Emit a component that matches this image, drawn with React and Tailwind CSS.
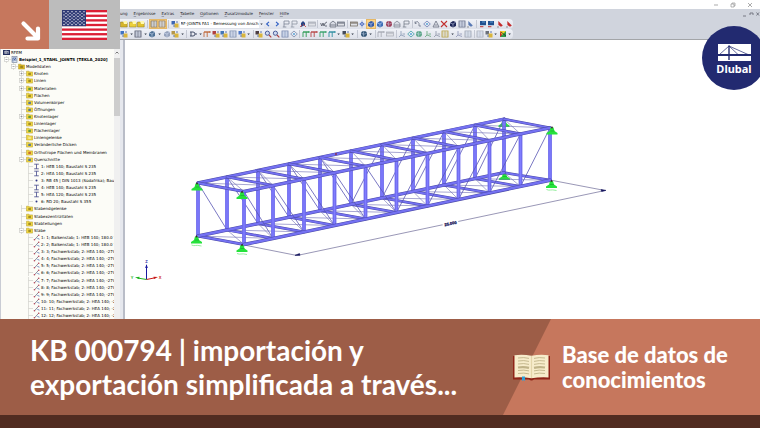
import React from 'react'

const MENU = ['Ergebnisse', 'Extras', 'Tabelle', 'Optionen', 'Zusatzmodule', 'Fenster', 'Hilfe']

// [level, icon, label, expander]
const TREE = [
  [0, 'app', 'RFEM'],
  [1, 'model', 'Beispiel_1_STAHL_JOINTS [TEKLA_2020]', '-'],
  [2, 'open', 'Modelldaten', '-'],
  [3, 'folder', 'Knoten', '+'],
  [3, 'folder', 'Linien', '+'],
  [3, 'green', 'Materialien', '+'],
  [3, 'folder', 'Flächen'],
  [3, 'blue', 'Volumenkörper'],
  [3, 'blue', 'Öffnungen'],
  [3, 'green', 'Knotenlager', '+'],
  [3, 'folder', 'Linienlager'],
  [3, 'green', 'Flächenlager'],
  [3, 'pale', 'Liniengelenke'],
  [3, 'blue', 'Veränderliche Dicken'],
  [3, 'red', 'Orthotrope Flächen und Membranen'],
  [3, 'blue', 'Querschnitte', '-'],
  [4, 'beam', '1: HEB 140; Baustahl S 235'],
  [4, 'beam', '2: HEA 140; Baustahl S 235'],
  [4, 'dot', '3: RB 45 | DIN 1013 (Südafrika); Bau'],
  [4, 'beam', '4: HEB 140; Baustahl S 235'],
  [4, 'beam', '5: HEA 120; Baustahl S 235'],
  [4, 'dot', '6: RD 20; Baustahl S 355'],
  [3, 'folder', 'Stabendgelenke'],
  [3, 'folder', 'Stabexzentrizitäten'],
  [3, 'folder', 'Stabteilungen'],
  [3, 'folder', 'Stäbe', '-'],
  [4, 'member', '1: 1; Balkenstab; 1: HEB 140; 180.0 °'],
  [4, 'member', '2: 2; Balkenstab; 1: HEB 140; 180.0 °'],
  [4, 'member', '3: 3; Fachwerkstab; 2: HEA 140; -270'],
  [4, 'member', '4: 4; Fachwerkstab; 2: HEA 140; -270'],
  [4, 'member', '5: 5; Fachwerkstab; 2: HEA 140; -270'],
  [4, 'member', '6: 6; Fachwerkstab; 2: HEA 140; -270'],
  [4, 'member', '7: 7; Fachwerkstab; 2: HEA 140; -270'],
  [4, 'member', '8: 8; Fachwerkstab; 2: HEA 140; -270'],
  [4, 'member', '9: 9; Fachwerkstab; 2: HEA 140; -270'],
  [4, 'member', '10: 10; Fachwerkstab; 2: HEA 140; -2'],
  [4, 'member', '11: 11; Fachwerkstab; 2: HEA 140; -2'],
  [4, 'member', '12: 12; Fachwerkstab; 2: HEA 140; -2'],
]

const GLYPHS = {
  folder: (c) => <><path d="M.5 2h3l.7.8h3V7H.5z" fill={c} stroke="#8a7420" strokeWidth=".5" /><path d="M3 1h4v3H4z" fill="#fff8b0" /></>,
  table: (c) => <><rect x="1" y="1" width="6" height="6" fill="#e8eefc" stroke={c} strokeWidth=".8" /><path d="M1 3h6M1 5h6M4 1v6" stroke={c} strokeWidth=".5" /></>,
  bar: (c) => <><rect x=".5" y="2" width="7" height="4" fill="#dfe1e6" stroke={c} strokeWidth=".7" /><path d="M1 3h6" stroke={c} /></>,
  stack: (c) => <><rect x=".5" y="1" width="3.5" height="3.5" fill={c} /><rect x="3.5" y="3.5" width="4" height="4" fill="#d9b53c" /><path d="M2 6h2M5 2h2" stroke="#3c5b9c" strokeWidth=".8" /></>,
  left: (c) => <path d="M5 1.8 2.6 4 5 6.2" fill="none" stroke={c} strokeWidth="1.1" />,
  right: (c) => <path d="M3 1.8 5.4 4 3 6.2" fill="none" stroke={c} strokeWidth="1.1" />,
  flag: (c) => <path d="M2 7V1h5v3H2M.8 7h3.5" fill="none" stroke={c} strokeWidth=".8" />,
  person: (c) => <><path d="M2 7V3l2-2 2 2v2" fill={c} /><path d="m4 4 3 3M1 7l2-2" stroke="#c23a3a" strokeWidth=".8" /></>,
  wave: (c) => <path d="M.6 3l1.2 3L3 3l1 3 1.2-3L7 2M5 6h2" fill="none" stroke={c} strokeWidth=".8" />,
  home: (c) => <><path d="M1 7V3.5L4 1l3 2.5V7z" fill="#d8dbe4" stroke={c} strokeWidth=".7" /><path d="M1 5h6" stroke={c} strokeWidth=".7" /></>,
  star: (c) => <><circle cx="4" cy="4" r="1.5" fill="none" stroke={c} /><path d="M4 .5v7M.5 4h7" stroke={c} strokeWidth=".5" /></>,
  cube: (c) => <><path d="M1 3l3-2 3 1v4L4 7.5 1 6z" fill={c} /><path d="M1 3l3 1 3-2M4 4v3" fill="none" stroke="#dfe8ff" strokeWidth=".5" /></>,
  ball: (c) => <><circle cx="4" cy="4" r="3" fill={c} /><path d="M1.4 3.4Q4 5 6.6 3.4M4 1q-1.6 3 0 6" fill="none" stroke="#cfdcf5" strokeWidth=".5" /></>,
  curve: (c) => <path d="M1 2.5q3-2.5 4 1v2.5h2M1 1.5v2h1.5" fill="none" stroke={c} strokeWidth=".8" />,
  diamond: (c) => <><path d="M4 1 7.3 4 4 7 .7 4z" fill="none" stroke={c} strokeWidth=".8" /><circle cx="4" cy="4" r="1" fill="#58a4d8" /></>,
  tri: (c) => <path d="M4 1 7 7H1zM2.5 5h3" fill="none" stroke={c} strokeWidth=".8" />,
  cross: (c) => <path d="m1 1 6 6M7 1 1 7" stroke={c} strokeWidth="1.1" />,
  lens: (c) => <><circle cx="3.4" cy="3.2" r="2.1" fill="#cfdbf2" stroke={c} strokeWidth=".9" /><path d="m5 5 2.3 2.4" stroke="#b03c3c" strokeWidth="1.1" /></>,
  screen: (c) => <><rect x="1" y="1" width="6" height="4.2" fill={c} /><path d="M1 6.7h3.4" stroke="#b33" /><path d="M3 2h3" stroke="#7fb8e8" strokeWidth=".7" /></>,
  pin: (c) => <><path d="M2.3 1 6.8 5.5 5 6.8 2.4 5z" fill={c} /><path d="M1 7h2" stroke="#555" strokeWidth=".6" /></>,
  frame: (c) => <path d="M1 7V2h6M1 2h6M4.2 2v5M7 1v2" fill="none" stroke={c} strokeWidth=".9" />,
  axes: (c) => <path d="M3 1v4l4 1.5M3 5 1 7M4.5 4h2.5" fill="none" stroke={c} strokeWidth=".8" />,
  plug: (c) => <path d="M1 2h3a2 2 0 0 1 0 4H1M6 4h2M2 2v4" fill="none" stroke={c} strokeWidth="1" />,
  spectrum: () => <><rect x="1" y="1" width="6" height="6" fill="#f2d22e" /><path d="M1 1v6h3z" fill="#c92a2a" /><path d="M1 7 7 1v6z" fill="#2c9a49" /><path d="M2 2 7 6" stroke="#222" strokeWidth=".7" /></>,
}

// 'v' is a drop-down arrow, '|' a group separator, '#' the module selector
const ROW_ONE = [
  ['folder', '#d5b52c'], ['folder', '#ecd03a'], ['folder', '#e2c22c'], '|',
  ['table', '#7b6a4c', true], ['table', '#8a7350', true], '|', ['stack', '#3c66b4'], '#',
  ['left', '#2f5fc4'], ['right', '#2f5fc4'], ['flag', '#7f8797'], ['flag', '#8d94a2'], ['person', '#2c4684'], ['bar', '#a1a6b1'], '|',
  ['wave', '#4c5260'], ['home', '#565d6c'], ['bar', '#5c6372'], '|',
  ['bar', '#6c6355'], ['star', '#5674c4'], ['cube', '#375ba5', true], ['cube', '#3e6fb8'], ['ball', '#9c3b56'], ['home', '#767c8b'], ['flag', '#777e8c'], '|',
  ['curve', '#6c7487'], ['diamond', '#6f7fb5'], ['tri', '#6a7080'], ['cross', '#c22f2f'], ['cube', '#1c2456'], ['table', '#5e6780'], ['pin', '#5879b4'], '|',
  ['screen', '#20508f'], ['screen', '#20508f'], ['pin', '#c42a2a'], ['pin', '#c42a2a'],
]

const ROW_TWO = [
  ['stack', '#3f73c4'], 'v', ['table', '#4c5264'], 'v', ['cube', '#4f7296'], 'v', ['cube', '#96a3bc'], ['stack', '#b5974a'], 'v', '|',
  ['plug', '#46506a'], 'v', ['frame', '#c06a3a'], ['stack', '#b04141'], ['stack', '#4376b8'], ['table', '#7587a7'], ['stack', '#4b77c9'], 'v', '|',
  ['stack', '#4b3d44'], ['lens', '#3d4f8d'], ['lens', '#3d4f8d'], ['table', '#6f81a8'], ['diamond', '#7b8cab'], '|',
  ['frame', '#2f9c55'], ['frame', '#b64545'], ['frame', '#36a06a'], ['frame', '#2e8ca0'], 'v', ['stack', '#444b5a'], 'v', '|',
  ['ball', '#2f5273'], 'v', '|', ['frame', '#a8acb5'], ['bar', '#a8acb5'], '|',
  ['axes', '#8899b4'], ['diamond', '#44a2a8'], ['ball', '#5ba586'], ['axes', '#61a477'], ['axes', '#8c93a6'], ['table', '#b59b31'], 'v', ['axes', '#8c93b4'], ['table', '#9aa0ae'], '|',
  ['table', '#a6abb6'], ['stack', '#6a6f7b'], 'v', ['spectrum', ''], 'v',
]

function ToolItem({ item }) {
  if (item === '|') return <span className="flex w-[3px] justify-center"><span className="h-2 w-px bg-[#c3c7d2]" /></span>
  if (item === 'v') {
    return (
      <button className="w-[5px]" aria-label="Optionen">
        <svg viewBox="0 0 5 8" className="h-2 w-full"><path d="M1.3 3.5h2.6L2.6 5z" fill="#333a4a" /></svg>
      </button>
    )
  }
  if (item === '#') {
    return (
      <label className="flex h-2 w-[84px] items-center bg-white">
        <select aria-label="Modul" className="h-2 min-w-0 flex-1 appearance-none overflow-hidden pl-px text-[4px] leading-[8px] text-black">
          <option>RF-JOINTS FA1 - Bemessung von Ansch</option>
        </select>
        <svg viewBox="0 0 5 8" className="h-2 w-[5px] bg-[#e9ecf3]"><path d="M1.3 3.5h2.4L2.5 5z" fill="#333a4a" /></svg>
      </label>
    )
  }
  const [name, color, active] = item
  return (
    <button aria-label={name} className={active ? 'w-2 bg-[#fbd48a] outline outline-[#e6b866]' : 'w-2'}>
      <svg viewBox="0 0 8 8" className="h-2 w-2">{GLYPHS[name](color)}</svg>
    </button>
  )
}

function Toolbar({ items, label }) {
  return (
    <div role="toolbar" aria-label={label} className="flex h-[10px] w-[393px] items-center justify-between rounded-r-sm bg-linear-to-b from-[#f0f2f8] to-[#dde0e9]">
      {items.map((item, i) => <ToolItem key={i} item={item} />)}
    </div>
  )
}

function TreeIcon({ kind }) {
  const fills = { folder: '#8d7b1e', open: '#8d7b1e', green: '#3d8a3d', blue: '#3763a8', red: '#c0542c', pale: '#f4eaa4' }
  return (
    <svg viewBox="0 0 7 7" className="h-[7px] w-[7px] shrink-0">
      {kind === 'app' && <><rect y="1" width="7" height="5" fill="#26305f" /><path d="M1 4h5M3 2v3M1 3l2-1 3 1" stroke="#fff" strokeWidth=".6" fill="none" /></>}
      {kind === 'model' && <><rect x="1" y=".5" width="5" height="6" fill="#dbe4f2" stroke="#6c7a94" strokeWidth=".6" /><path d="M2 5.5V2h3L3 4h2.5" stroke="#2f4f8f" strokeWidth=".7" fill="none" /></>}
      {fills[kind] && (
        <>
          <path d="M.5 1.2H3l.6.7h3v4.2H.5z" fill={kind === 'open' ? '#d9b520' : '#f0d640'} stroke="#b39a2a" strokeWidth=".5" />
          <rect x="2.3" y="2.8" width="2.6" height="2.2" fill={fills[kind]} opacity=".8" />
        </>
      )}
      {kind === 'beam' && <path d="M1.2 1.2h4.6M1.2 5.8h4.6M3.5 1v5" stroke="#5a5f98" strokeWidth=".9" />}
      {kind === 'dot' && <circle cx="3.5" cy="3.5" r="1" fill="#2f3585" />}
      {kind === 'member' && <><path d="M1.3 6 5.6 1.3" stroke="#6b7188" strokeWidth=".8" /><circle cx="5.7" cy="1.3" r=".8" fill="#b8485a" /><circle cx="1.4" cy="5.8" r=".8" fill="#b8485a" /><path d="M4 4.5h2V6" stroke="#7f9ac8" strokeWidth=".7" fill="none" /></>}
    </svg>
  )
}

const INDENTS = ['pl-[2px]', 'pl-[2px]', 'pl-[9px]', 'pl-[17px]', 'pl-[24px]']

function TreeRow({ row }) {
  const [level, icon, label, expander] = row
  return (
    <li className={`flex min-h-0 flex-1 items-center whitespace-nowrap ${INDENTS[level]}`}>
      {level > 0 && (
        <svg viewBox="0 0 8 7" className="h-[7px] w-2 shrink-0">
          <path d="M3.5 0v7M3.5 3.5H8" stroke="#c9c9c4" strokeWidth=".6" />
          {expander && <><rect x="1.5" y="1.5" width="4" height="4" fill="#fff" stroke="#c4c4c0" strokeWidth=".6" /><path d={expander === '+' ? 'M2.5 3.5h2M3.5 2.5v2' : 'M2.5 3.5h2'} stroke="#777" strokeWidth=".6" /></>}
        </svg>
      )}
      <TreeIcon kind={icon} />
      <span className={level === 1 ? 'pl-px font-bold' : 'pl-px'}>{label}</span>
    </li>
  )
}

function Navigator() {
  return (
    <aside className="flex w-[125px] shrink-0 border-r-2 border-[#b9bdc8] bg-[#e6e8ee] pt-[9px]">
      <ul className="flex min-w-0 flex-1 flex-col overflow-hidden border-l border-[#c9ccd4] bg-[#fcfcf7] text-[4px] leading-[7px] text-black">
        {TREE.map((row, i) => <TreeRow key={i} row={row} />)}
      </ul>
      <div className="mr-[3px] flex w-[6px] flex-col bg-[#f0f0f0]">
        <svg viewBox="0 0 6 9" className="h-[9px]"><path d="M1.5 4.5 3 3l1.5 1.5" stroke="#555" strokeWidth=".8" fill="none" /></svg>
        <div className="h-[58px] bg-[#cdcdcd]" />
      </div>
    </aside>
  )
}

const FRONT_X = [244, 273, 304, 334.5, 365.5, 396.5, 427.5, 458.5, 489.5, 520.5, 550]
const BACK_X = [198, 227, 258, 289, 320, 351, 382, 413, 444, 475, 504]
const front = FRONT_X.map((x) => ({ x, top: 191.5 - (x - 244) * 0.208, bottom: 244.5 - (x - 244) * 0.21 }))
const back = BACK_X.map((x) => ({ x, top: 183 - (x - 198) * 0.209, bottom: 236 - (x - 198) * 0.207 }))

function Beam({ x1, y1, x2, y2, w = 3 }) {
  return (
    <g strokeLinecap="round">
      <line x1={x1} y1={y1} x2={x2} y2={y2} stroke="#4a48a6" strokeWidth={w} />
      <line x1={x1} y1={y1} x2={x2} y2={y2} stroke="#7471f2" strokeWidth={w - 1} />
    </g>
  )
}

function Face({ nodes }) {
  const last = nodes.length - 1
  return (
    <g>
      {nodes.slice(0, last).map((n, i) => {
        const m = nodes[i + 1]
        return i < 5
          ? <line key={i} x1={n.x} y1={n.top} x2={m.x} y2={m.bottom} stroke="#5855b4" strokeWidth=".8" />
          : <line key={i} x1={n.x} y1={n.bottom} x2={m.x} y2={m.top} stroke="#5855b4" strokeWidth=".8" />
      })}
      {nodes.map((n, i) => <line key={i} x1={n.x} y1={n.top} x2={n.x} y2={n.bottom} stroke="#6d6aec" strokeWidth="3.8" />)}
      {nodes.map((n, i) => <line key={i} x1={n.x} y1={n.top} x2={n.x} y2={n.bottom} stroke="#807dff" strokeWidth="1.4" />)}
      <Beam x1={nodes[0].x} y1={nodes[0].top} x2={nodes[last].x} y2={nodes[last].top} w={3.4} />
      <Beam x1={nodes[0].x} y1={nodes[0].bottom} x2={nodes[last].x} y2={nodes[last].bottom} w={3.4} />
    </g>
  )
}

function Deck({ side }) {
  return (
    <g>
      {back.slice(0, 10).map((b, i) => (
        <path key={i} d={`M${b.x} ${b[side]}L${front[i + 1].x} ${front[i + 1][side]}M${back[i + 1].x} ${back[i + 1][side]}L${front[i].x} ${front[i][side]}`} stroke="#6d6bb4" strokeWidth=".6" fill="none" />
      ))}
      {back.map((b, i) => <Beam key={i} x1={b.x} y1={b[side]} x2={front[i].x} y2={front[i][side]} w={2.8} />)}
    </g>
  )
}

function Support({ x, y, ground }) {
  return (
    <g transform={`translate(${x} ${y})`}>
      <path d="M-1.5 0h3l1 3.5 3 2V7h-11V5.5l3-2z" fill="#25e23b" />
      <path d="M-1.5 3.5h4" stroke="#14a92b" strokeWidth=".6" />
      {ground && <path d="M-5 8.5q2.5 1 4 .5t6 .5" fill="none" stroke="#7ce886" strokeWidth=".8" />}
      <circle r=".9" fill="#3a2a2a" />
    </g>
  )
}

function Model() {
  return (
    <svg viewBox="125 40 635 279" preserveAspectRatio="xMinYMin meet" className="h-full w-full" fontFamily="Liberation Sans, sans-serif">
      <path d="M244 245 297 255.5 605 190.5 550 180" fill="none" stroke="#6d6a96" strokeWidth=".7" />
      <path d="m295 255.3 4.5-1.7.5 1.7zM606 190.4l-5-.8.6 1.8z" fill="#16165e" stroke="#16165e" strokeWidth=".6" />
      <g transform="translate(450.5 223.5) rotate(-12)">
        <rect x="-8" y="-3" width="16" height="6" fill="#fff" />
        <text textAnchor="middle" y="1.5" fontSize="4" fontWeight="bold" fill="#14145a" stroke="#14145a" strokeWidth=".3">25.000</text>
      </g>
      <Support x={504} y={120} />
      <Support x={504.5} y={173} />
      <Deck side="bottom" />
      <Face nodes={back} />
      <Deck side="top" />
      <Face nodes={front} />
      <Support x={197} y={183.5} />
      <Support x={242} y={192} />
      <Support x={196.5} y={236.5} ground />
      <Support x={242} y={245} ground />
      <Support x={552} y={127.5} />
      <Support x={551.5} y={181} ground />
      <circle cx="336" cy="154" r=".9" fill="#8b2444" />
      <path d="M146.5 279.5V265" stroke="#1818a0" />
      <path d="m145.2 268 1.3-4 1.3 4z" fill="#1818a0" />
      <path d="m146.5 279.5 9-1.8" stroke="#c81818" />
      <path d="m153.5 276.7 4.5.3-4 2z" fill="#c81818" />
      <path d="m146.5 279.5-9-1.5" stroke="#22b522" />
      <path d="m139.5 276.7-4.5.6 4.2 2z" fill="#22b522" />
      <g fontSize="4" fontWeight="bold" textAnchor="middle">
        <text x="146.5" y="262.5" fill="#1818a0">Z</text>
        <text x="160" y="279" fill="#c81818">X</text>
        <text x="132" y="279" fill="#22b522">Y</text>
      </g>
    </svg>
  )
}

function Flag() {
  return (
    <svg viewBox="0 0 45 30" className="h-[30px] w-[45px]" aria-label="USA">
      <rect width="45" height="30" fill="#fff" />
      {[0, 1, 2, 3, 4, 5, 6].map((i) => <rect key={i} y={(i * 60) / 13} width="45" height={30 / 13} fill="#dc1f35" />)}
      <rect width="24" height="16.2" fill="#2f3a75" />
      {[0, 1, 2, 3, 4, 5, 6, 7, 8].map((r) => Array.from({ length: r % 2 ? 5 : 6 }, (_, c) => (
        <circle key={`${r}-${c}`} cx={2 + c * 4 + (r % 2) * 2} cy={1.7 + r * 1.6} r=".65" fill="#fff" />
      )))}
    </svg>
  )
}

function Badge() {
  return (
    <div className="absolute top-0 left-0 flex h-[49px] w-[120px]">
      <div className="flex w-[49px] items-center justify-center bg-[#c6775d]">
        <svg viewBox="0 0 49 49" className="h-[49px] w-[49px]"><path d="M23.5 23.5 38 38M38 28.5V38.5H27.5" fill="none" stroke="#fff" strokeWidth="4.2" strokeLinecap="round" strokeLinejoin="round" /></svg>
      </div>
      <div className="flex flex-1 items-center justify-center bg-[#bcbcbc]"><Flag /></div>
    </div>
  )
}

function Logo() {
  return (
    <div className="absolute top-[26px] -right-[6px] flex h-16 w-16 flex-col items-center justify-center gap-px rounded-full bg-[#222a70] pt-[3px] text-white">
      <svg viewBox="0 0 33 17" className="h-[17px] w-[33px] shrink-0">
        <rect width="33" height="17" fill="#fff" />
        <path d="M0 11h33" stroke="#222a70" strokeWidth="1.8" />
        <path d="M11 1.5V16" stroke="#222a70" strokeWidth="1.4" />
        <path d="M11 2 1.5 10.5M11 2l9 8.5M11 2l19 8.5" fill="none" stroke="#222a70" strokeWidth=".7" />
      </svg>
      <span className="text-[11px] leading-[14px] font-bold" style={{ fontFamily: '"Noto Sans", sans-serif' }}>Dlubal</span>
    </div>
  )
}

function Book() {
  return (
    <svg viewBox="0 0 37 27" className="h-[27px] w-[37px] shrink-0">
      <path d="M0 2h37v23.5H21q-2.5 1.8-5 0H0z" fill="#8f2418" />
      <path d="M1.5 1.2Q10 0 18.5 1.8 27 0 35.5 1.2V23.5Q27 23 18.5 24.2 10 23 1.5 23.5z" fill="#f7eccb" />
      <path d="M18.5 2v22" stroke="#e3d5aa" strokeWidth="1.2" />
      {[4, 7, 10, 13.5, 16.5, 19.5].map((y) => (
        <path key={y} d={`M5 ${y}q6-1 11 .4M21 ${y + 0.4}q5-1.4 11-.4`} fill="none" stroke="#c0b388" strokeWidth={y === 13.5 ? 2.2 : 0.9} />
      ))}
      <path d="M9 22.5h3V27l-1.5-1L9 27z" fill="#2da0d8" />
    </svg>
  )
}

function Banner() {
  return (
    <footer className="shrink-0 bg-[#512c21] pb-[13px] text-white" style={{ fontFamily: 'Lato, sans-serif' }}>
      <div className="flex h-24 bg-[#9d5d47]">
        <h1 className="flex min-w-0 flex-1 flex-col justify-center pl-[30px] text-[28px] leading-[34px] font-bold whitespace-nowrap">
          <span>KB 000794 | importación y</span>
          <span>exportación simplificada a través...</span>
        </h1>
        <div className="relative flex w-[257px] shrink-0 items-center pl-[10px]">
          <div className="absolute inset-0 bg-[#c6775d] [clip-path:polygon(48px_0,100%_0,100%_100%,0_100%)]" />
          <div className="relative flex items-center gap-3">
            <Book />
            <p className="flex flex-col text-[22px] leading-[25px] font-black whitespace-nowrap">
              <span>Base de datos de</span>
              <span>conocimientos</span>
            </p>
          </div>
        </div>
      </div>
    </footer>
  )
}

export default function App() {
  return (
    <div className="relative flex h-screen flex-col overflow-hidden bg-white" style={{ fontFamily: '"DejaVu Sans", sans-serif' }}>
      <div className="flex h-[9px] shrink-0 items-center justify-end gap-[11px] pr-[7px] text-[#888]">
        <button aria-label="Minimieren"><svg viewBox="0 0 6 6" className="h-[6px] w-[6px]"><path d="M1 3h4" stroke="currentColor" strokeWidth=".7" /></svg></button>
        <button aria-label="Verkleinern"><svg viewBox="0 0 6 6" className="h-[6px] w-[6px]"><path d="M1 2h3v3H1zM2 2V1h3v3H4" stroke="currentColor" strokeWidth=".6" fill="none" /></svg></button>
        <button aria-label="Schließen"><svg viewBox="0 0 6 6" className="h-[6px] w-[6px]"><path d="m1 1 4 4M5 1 1 5" stroke="currentColor" strokeWidth=".7" /></svg></button>
      </div>
      <header className="shrink-0 border-b border-[#a3a5a8] bg-[#d0d4dd] pl-[120px]">
        <div className="flex h-[10px] items-center text-[4px] leading-[10px] text-[#22242a]">
          <nav className="flex flex-1 gap-[6px]">
            <button>ung</button>
            {MENU.map((m) => <button key={m}><span className="underline decoration-[#9a9eaa]">{m[0]}</span>{m.slice(1)}</button>)}
          </nav>
          <svg viewBox="0 0 18 6" className="h-[6px] w-[18px]"><path d="M1 5h3M8 4V2h3v2M14.5 1.5l2.5 3M17 1.5l-2.5 3" stroke="#6d717c" strokeWidth=".9" fill="none" /></svg>
        </div>
        <Toolbar items={ROW_ONE} label="Standard" />
        <Toolbar items={ROW_TWO} label="Ansicht" />
      </header>
      <main className="flex min-h-0 flex-1">
        <Navigator />
        <section className="min-w-0 flex-1"><Model /></section>
      </main>
      <Banner />
      <Badge />
      <Logo />
    </div>
  )
}
